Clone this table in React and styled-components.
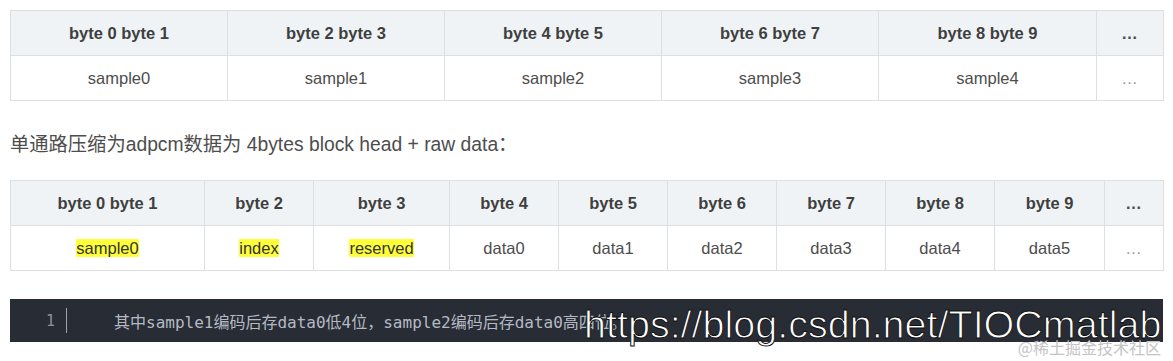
import React from "react";
import styled, { createGlobalStyle } from "styled-components";

const Global = createGlobalStyle`
  html, body { margin: 0; padding: 0; background: #fff; }
  body { font-family: "Liberation Sans", Arial, "Noto Sans CJK SC", sans-serif; }
`;

const Page = styled.div`
  position: relative;
  width: 1173px;
  height: 361px;
  padding: 10px 10px 0 10px;
  box-sizing: border-box;
  overflow: hidden;
`;

const Table = styled.table`
  width: 1153px;
  table-layout: fixed;
  border-collapse: collapse;
  margin: 0;
  font-size: 16.5px;
`;

const Col = styled.col`
  width: ${(p) => p.$w}px;
`;

const HeadCell = styled.th`
  height: 44px;
  padding: 0;
  background: #eff3f5;
  border: 1px solid #dde0e3;
  color: #3f3f3f;
  font-weight: 700;
  text-align: center;
  vertical-align: middle;
`;

const Cell = styled.td`
  height: 44px;
  padding: 0;
  background: #fff;
  border: 1px solid #dde0e3;
  color: #4d4d4d;
  text-align: center;
  vertical-align: middle;
`;

const Dots = styled.span`
  color: ${(p) => (p.$head ? "#4d4d4d" : "#999")};
  letter-spacing: 1px;
`;

const Mark = styled.mark`
  background: #ffff3a;
  color: #333;
  padding: 0;
`;

const Para = styled.p`
  margin: 25px 0 16px 0;
  font-size: 19.3px;
  line-height: 38px;
  color: #4d4d4d;
  font-family: "Liberation Sans", Arial, "Noto Sans CJK SC", sans-serif;
`;

const Code = styled.div`
  margin-top: 28px;
  height: 43px;
  background: #282c34;
  display: flex;
  align-items: center;
  font-family: "DejaVu Sans Mono", "Noto Sans CJK SC", monospace;
  font-size: 16px;
`;

const LineNo = styled.div`
  width: 57px;
  height: 25px;
  box-sizing: border-box;
  padding-right: 11px;
  border-right: 1px solid #a0a4aa;
  display: flex;
  align-items: center;
  justify-content: flex-end;
  color: #8c919a;
  font-size: 15px;
`;

const CodeText = styled.div`
  padding-left: 47px;
  color: #b4bac4;
  white-space: pre;
`;

const Watermark = styled.div`
  position: absolute;
  left: 584px;
  top: 301px;
  font-family: "Liberation Sans", Arial, sans-serif;
  font-size: 39.5px;
  line-height: 46px;
  color: #fff;
  -webkit-text-stroke: 1px #111;
  white-space: nowrap;
`;

const Brand = styled.div`
  position: absolute;
  right: 12px;
  top: 337px;
  font-family: "Noto Sans CJK SC", sans-serif;
  font-size: 16px;
  line-height: 20px;
  color: #c4c4c4;
  white-space: nowrap;
`;

const t1 = [
  ["byte 0 byte 1", "sample0", 217],
  ["byte 2 byte 3", "sample1", 217],
  ["byte 4 byte 5", "sample2", 217],
  ["byte 6 byte 7", "sample3", 217],
  ["byte 8 byte 9", "sample4", 218],
];

const t2 = [
  ["byte 0 byte 1", "sample0", 194, true],
  ["byte 2", "index", 109, true],
  ["byte 3", "reserved", 136, true],
  ["byte 4", "data0", 109],
  ["byte 5", "data1", 109],
  ["byte 6", "data2", 109],
  ["byte 7", "data3", 109],
  ["byte 8", "data4", 109],
  ["byte 9", "data5", 110],
];

function DataTable({ cols, lastW }) {
  return (
    <Table>
      <colgroup>
        {cols.map((c) => (
          <Col key={c[0]} $w={c[2]} />
        ))}
        <Col $w={lastW} />
      </colgroup>
      <thead>
        <tr>
          {cols.map((c) => (
            <HeadCell key={c[0]}>{c[0]}</HeadCell>
          ))}
          <HeadCell>
            <Dots $head>…</Dots>
          </HeadCell>
        </tr>
      </thead>
      <tbody>
        <tr>
          {cols.map((c) => (
            <Cell key={c[0]}>{c[3] ? <Mark>{c[1]}</Mark> : c[1]}</Cell>
          ))}
          <Cell>
            <Dots>…</Dots>
          </Cell>
        </tr>
      </tbody>
    </Table>
  );
}

export default function App() {
  return (
    <>
      <Global />
      <Page>
        <DataTable cols={t1} lastW={67} />
        <Para>单通路压缩为adpcm数据为 4bytes block head + raw data：</Para>
        <DataTable cols={t2} lastW={59} />
        <Code>
          <LineNo>1</LineNo>
          <CodeText>其中sample1编码后存data0低4位，sample2编码后存data0高四位。</CodeText>
        </Code>
        <Watermark>https://blog.csdn.net/TIOCmatlab</Watermark>
        <Brand>@稀土掘金技术社区</Brand>
      </Page>
    </>
  );
}
